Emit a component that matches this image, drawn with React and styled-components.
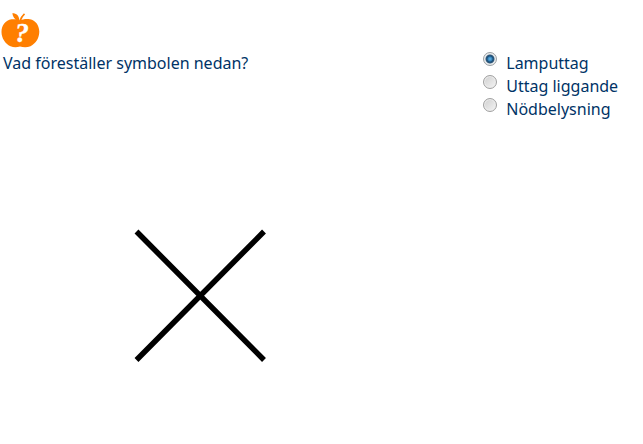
import React, { useState } from "react";
import styled, { createGlobalStyle } from "styled-components";

const GlobalStyle = createGlobalStyle`
  body {
    margin: 0;
    background: #fff;
    color: #003366;
    font-family: "Noto Sans", "Open Sans", sans-serif;
    font-size: 16px;
    line-height: 23px;
  }
`;

const Page = styled.main`
  padding-top: 12px;
`;

const Header = styled.header`
  display: flex;
  height: 40px;
`;

const Exercise = styled.form`
  display: grid;
  grid-template-columns: 3fr 1fr;
`;

const Question = styled.section`
  padding-left: 3px;
`;

const QuestionText = styled.p`
  margin: 0;
`;

const SymbolFigure = styled.figure`
  margin: 151px 0 0 129px;
`;

const Options = styled.fieldset`
  min-width: 0;
  margin: 0;
  padding: 0;
  border: 0;
`;

const Option = styled.label`
  display: flex;
  align-items: flex-start;
  gap: 9px;
  white-space: nowrap;
`;

const Radio = styled.input`
  appearance: none;
  flex: none;
  box-sizing: border-box;
  width: 14px;
  height: 14px;
  margin: 0 0 0 1px;
  border: 1px solid #a0a0a0;
  border-radius: 50%;
  background: linear-gradient(135deg, #cfcfcf, #f4f4f4);
  box-shadow: inset 0 0 0 1px #ededed;

  &:checked {
    border-color: #999fa3;
    background: radial-gradient(
      circle at 50% 50%,
      #6ab8e6 0,
      #3484bd 2px,
      #1d4f78 3px,
      #31597a 4px,
      #e2e6e9 5px
    );
  }
`;

const choices = ["Lamputtag", "Uttag liggande", "Nödbelysning"];

function AppleIcon() {
  return (
    <svg width="40" height="37" viewBox="0 0 40 37" aria-hidden="true">
      <path
        fill="#ff7f00"
        d="M20 8.5C18.5 6.8 14.5 7.3 11.5 7.3C5.5 8.5 1.5 13 1.5 20C1.5 26 5 31.5 10.5 34.3C14 35.6 17 35.3 20 34.5C23.5 35.3 27 35.5 30.5 34.2C36 31.2 39.3 26 39.3 19.5C39 13 35.5 8.5 30 7.3C26 6.6 23 7.2 20 8.5Z"
      />
      <path
        fill="#ff7f00"
        d="M12.3 1.3C16.7 1.3 19 4 19.3 8L18.2 9C14.8 7.8 12.8 5 12.3 1.3Z"
      />
      <path d="M20 9Q21.5 4.5 24.5 1.8" fill="none" stroke="#ff7f00" strokeWidth="1.6" />
      <text
        x="22"
        y="30"
        textAnchor="middle"
        fill="#fff"
        stroke="#fff"
        strokeWidth="0.3"
        fontFamily="'Liberation Serif', serif"
        fontSize="28"
        fontStyle="italic"
        fontWeight="bold"
      >
        ?
      </text>
    </svg>
  );
}

function CeilingOutletSymbol() {
  return (
    <svg width="136" height="138" viewBox="0 0 136 138" role="img" aria-label="Symbol">
      <path d="M4.5 5.5L132 134M132 5.5L4.5 134" stroke="#000" strokeWidth="5.5" />
    </svg>
  );
}

export default function App() {
  const [answer, setAnswer] = useState(choices[0]);

  return (
    <>
      <GlobalStyle />
      <Page>
        <Header>
          <AppleIcon />
        </Header>
        <Exercise>
          <Question>
            <QuestionText id="question">Vad föreställer symbolen nedan?</QuestionText>
            <SymbolFigure>
              <CeilingOutletSymbol />
            </SymbolFigure>
          </Question>
          <Options aria-labelledby="question">
            {choices.map((choice) => (
              <Option key={choice}>
                <Radio
                  type="radio"
                  name="answer"
                  value={choice}
                  checked={answer === choice}
                  onChange={() => setAnswer(choice)}
                />
                {choice}
              </Option>
            ))}
          </Options>
        </Exercise>
      </Page>
    </>
  );
}
